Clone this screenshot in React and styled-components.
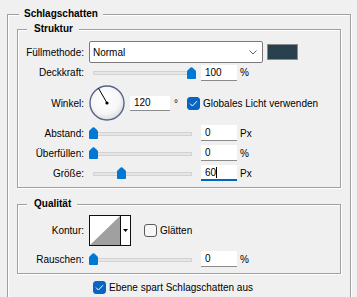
import React from "react";
import styled, { createGlobalStyle } from "styled-components";

const GlobalStyle = createGlobalStyle`
  html, body {
    margin: 0;
    background: #f0f0f0;
    overflow: hidden;
  }
  body {
    font-family: "Liberation Sans", Arial, sans-serif;
    font-size: 10px;
    color: #000;
  }
`;

const ThumbIcon = () => (
  <svg width="9" height="12" viewBox="0 0 9 12">
    <path d="M0 4.6 Q0 3.8 0.7 3.2 L3.6 0.5 Q4.5 -0.2 5.4 0.5 L8.3 3.2 Q9 3.8 9 4.6 V11 Q9 12 8 12 H1 Q0 12 0 11 Z" fill="#0078d4" />
  </svg>
);

const CheckMark = () => (
  <svg width="9" height="7" viewBox="0 0 9 7">
    <path d="M1 3.6 L3.4 6 L8 1.2" fill="none" stroke="#fff" strokeWidth="1" />
  </svg>
);

const Chevron = () => (
  <svg width="8" height="5" viewBox="0 0 8 5">
    <path d="M0.5 0.5 L4 4 L7.5 0.5" fill="none" stroke="#606060" strokeWidth="1" />
  </svg>
);

const AngleDial = ({ angle }) => {
  const rad = (angle * Math.PI) / 180;
  const x = 18 + Math.cos(rad) * 17;
  const y = 18 - Math.sin(rad) * 17;
  return (
    <svg width="36" height="36" viewBox="0 0 36 36">
      <defs>
        <radialGradient id="dialFill" cx="45%" cy="40%" r="60%">
          <stop offset="0%" stopColor="#ffffff" />
          <stop offset="70%" stopColor="#f6f6f6" />
          <stop offset="100%" stopColor="#dcdcdc" />
        </radialGradient>
      </defs>
      <circle cx="18" cy="18" r="17" fill="url(#dialFill)" stroke="#55648a" strokeWidth="1.4" />
      <line x1="18" y1="18" x2={x} y2={y} stroke="#000" strokeWidth="1" />
      <circle cx="18" cy="18" r="1.6" fill="#000" />
    </svg>
  );
};

const Slider = ({ value }) => (
  <SliderWrap>
    <Track />
    <Thumb style={{ left: `${value * 98}px` }}>
      <ThumbIcon />
    </Thumb>
  </SliderWrap>
);

const Checkbox = ({ checked }) => (
  <CheckBox $checked={checked}>{checked && <CheckMark />}</CheckBox>
);

const SliderRow = ({ label, value, number, unit, focused, mt }) => (
  <Row $h={18} $mt={mt}>
    <Label>{label}</Label>
    <Slider value={value} />
    <NumberField $w={36} $focused={focused}>
      {number}
      {focused && <Caret />}
    </NumberField>
    <Unit>{unit}</Unit>
  </Row>
);

const App = () => {
  return (
    <Page>
      <GlobalStyle />
      <OuterBox>
        <OuterLegend>Schlagschatten</OuterLegend>
        <Section $top={6}>
          <SectionLegend>Struktur</SectionLegend>
          <Row $h={22}>
            <Label>Füllmethode:</Label>
            <Select>
              <span>Normal</span>
              <Chevron />
            </Select>
            <Swatch />
          </Row>
          <Row $h={17} $mt={1}>
            <Label>Deckkraft:</Label>
            <Slider value={1} />
            <NumberField $w={36}>100</NumberField>
            <Unit>%</Unit>
          </Row>
          <Row $h={40} $mt={2}>
            <Label>Winkel:</Label>
            <AngleDial angle={120} />
            <NumberField $w={40} $h={15} $gap={5}>120</NumberField>
            <Degree>°</Degree>
            <Checkbox checked />
            <CheckText>Globales Licht verwenden</CheckText>
          </Row>
          <SliderRow label="Abstand:" value={0} number="0" unit="Px" mt={1} />
          <SliderRow label="Überfüllen:" value={0} number="0" unit="%" mt={2} />
          <SliderRow label="Größe:" value={0.29} number="60" unit="Px" focused mt={2} />
        </Section>
        <Section $top={5} $mt={10}>
          <SectionLegend>Qualität</SectionLegend>
          <Row $h={31}>
            <Label>Kontur:</Label>
            <ContourPicker>
              <ContourPreview>
                <svg width="30" height="29" viewBox="0 0 30 29">
                  <polygon points="0,29 30,0 30,29" fill="#a0a0a0" />
                </svg>
              </ContourPreview>
              <ContourArrow>
                <svg width="5" height="3" viewBox="0 0 5 3">
                  <polygon points="0,0 5,0 2.5,3" fill="#000" />
                </svg>
              </ContourArrow>
            </ContourPicker>
            <GapBox>
              <Checkbox />
            </GapBox>
            <CheckText>Glätten</CheckText>
          </Row>
          <SliderRow label="Rauschen:" value={0} number="0" unit="%" mt={4} />
        </Section>
        <BottomRow>
          <Checkbox checked />
          <CheckText>Ebene spart Schlagschatten aus</CheckText>
        </BottomRow>
      </OuterBox>
    </Page>
  );
};

const Page = styled.div`
  padding: 8px 6px 0 7px;
`;

const OuterBox = styled.fieldset`
  margin: 0;
  min-width: 0;
  padding: 3px 9px 30px 9px;
  border: 1px solid #a0a0a0;
  box-shadow: inset 1px 1px 0 #fff, 1px 1px 0 #fff;
`;

const OuterLegend = styled.legend`
  margin-left: 2px;
  padding: 0 5px;
  line-height: 12px;
  font-weight: bold;
  background: #f0f0f0;
`;

const Section = styled.fieldset`
  margin: ${(p) => p.$mt || 0}px 0 0 0;
  min-width: 0;
  padding: ${(p) => p.$top}px 0 5px 0;
  border: 1px solid #a0a0a0;
  box-shadow: inset 1px 1px 0 #fff, 1px 1px 0 #fff;
`;

const SectionLegend = styled.legend`
  margin-left: 9px;
  padding: 0 6px 0 7px;
  line-height: 12px;
  font-weight: bold;
  background: #f0f0f0;
`;

const Row = styled.div`
  display: flex;
  align-items: center;
  height: ${(p) => p.$h}px;
  margin-top: ${(p) => p.$mt || 0}px;
`;

const Label = styled.span`
  flex: none;
  width: 66px;
  margin-right: 5px;
  text-align: right;
  white-space: nowrap;
`;

const Select = styled.div`
  box-sizing: border-box;
  width: 174px;
  height: 22px;
  padding: 0 5px 0 3px;
  display: flex;
  align-items: center;
  justify-content: space-between;
  background: #fff;
  border: 1px solid #7a7a7a;
  border-radius: 2px;
`;

const Swatch = styled.div`
  box-sizing: border-box;
  width: 31px;
  height: 16px;
  margin-left: 4px;
  background: #29414f;
  border: 1px solid #8a8a8a;
`;

const SliderWrap = styled.div`
  position: relative;
  flex: none;
  width: 107px;
  height: 100%;
  padding: 0 4px;
  box-sizing: border-box;
  display: flex;
  align-items: center;
`;

const Track = styled.div`
  width: 100%;
  height: 4px;
  margin-top: 1px;
  box-sizing: border-box;
  background: #e6e6e6;
  border: 1px solid #d2d2d2;
`;

const Thumb = styled.div`
  position: absolute;
  top: 50%;
  width: 9px;
  height: 12px;
  margin-top: -6px;
  line-height: 0;
`;

const NumberField = styled.div`
  flex: none;
  box-sizing: border-box;
  width: ${(p) => p.$w}px;
  height: ${(p) => p.$h || 16}px;
  margin-left: ${(p) => p.$gap || 5}px;
  padding-left: 4px;
  display: flex;
  align-items: center;
  background: #fff;
  border-bottom: ${(p) => (p.$focused ? "2px solid #0067c0" : "1px solid #8a8a8a")};
`;

const Caret = styled.span`
  display: inline-block;
  width: 1px;
  height: 11px;
  background: #000;
`;

const Unit = styled.span`
  margin-left: 3px;
`;

const Degree = styled.span`
  margin-left: 4px;
  margin-right: 9px;
`;

const CheckBox = styled.div`
  flex: none;
  box-sizing: border-box;
  width: 13px;
  height: 13px;
  border-radius: 3px;
  display: flex;
  align-items: center;
  justify-content: center;
  background: ${(p) => (p.$checked ? "#0a64c2" : "#f7f7f7")};
  border: 1px solid ${(p) => (p.$checked ? "#0a64c2" : "#5a5a5a")};
`;

const CheckText = styled.span`
  margin-left: 3px;
  white-space: nowrap;
`;

const ContourPicker = styled.div`
  flex: none;
  display: flex;
  width: 42px;
  height: 31px;
  box-sizing: border-box;
  border: 1px solid #111;
  background: #fff;
`;

const ContourPreview = styled.div`
  width: 30px;
  line-height: 0;
  border-right: 1px solid #111;
`;

const ContourArrow = styled.div`
  flex: 1;
  display: flex;
  align-items: center;
  justify-content: center;
`;

const GapBox = styled.div`
  margin-left: 13px;
  display: flex;
`;

const BottomRow = styled.div`
  display: flex;
  align-items: center;
  height: 18px;
  margin-top: 4px;
  padding-left: 76px;
`;

export default App;
